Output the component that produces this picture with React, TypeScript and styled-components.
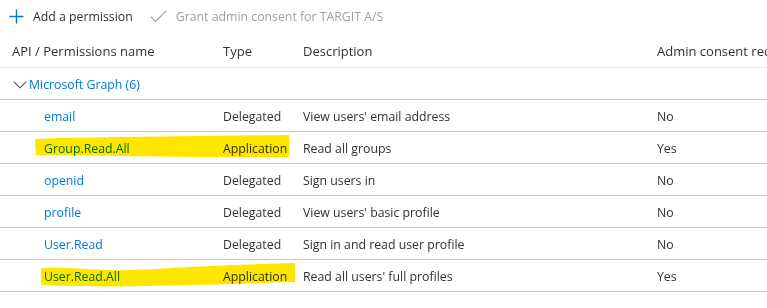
import React from 'react'
import styled, { createGlobalStyle } from 'styled-components'

const GlobalStyle = createGlobalStyle`
  html, body {
    margin: 0;
    padding: 0;
    background: #ffffff;
    overflow: hidden;
  }
  body {
    font-family: "Segoe UI", "Open Sans", "Liberation Sans", sans-serif;
    font-size: 12.3px;
    color: #323130;
  }
`

const Page = styled.div`
  width: 767px;
  height: 307px;
  padding-top: 1px;
  overflow: hidden;
  white-space: nowrap;
`

const Toolbar = styled.div`
  height: 31px;
  display: flex;
  align-items: center;
  padding-left: 9px;
`

const ToolButton = styled.button<{ $disabled?: boolean }>`
  display: flex;
  align-items: center;
  gap: 9px;
  padding: 0;
  margin-right: 17px;
  border: none;
  background: none;
  font: inherit;
  color: ${p => (p.$disabled ? '#a19f9d' : '#323130')};
  cursor: ${p => (p.$disabled ? 'default' : 'pointer')};
`

const Grid = styled.div`
  display: grid;
  grid-template-columns: 211px 80px 354px 1fr;
`

const HeadCell = styled.div`
  height: 33px;
  padding-top: 2px;
  box-sizing: content-box;
  display: flex;
  align-items: center;
  padding-left: 12px;
  font-size: 13px;
  color: #323130;
  border-bottom: 1px solid #edebe9;
`

const Cell = styled.div<{ $indent?: number }>`
  position: relative;
  height: 29px;
  padding-top: 2px;
  display: flex;
  align-items: center;
  padding-left: ${p => p.$indent ?? 12}px;
  border-bottom: 1px solid #c8c6c4;
`

const GroupCell = styled(Cell)`
  grid-column: 1 / -1;
  gap: 2px;
`

const Link = styled.a`
  color: #0078d4;
  text-decoration: none;
  cursor: pointer;
`

const Marker = styled.svg`
  position: absolute;
  left: 0;
  top: 2px;
  pointer-events: none;
  mix-blend-mode: multiply;
  z-index: 2;
`

type Perm = {
  name: string
  type: string
  desc: string
  consent: string
  marker?: string
}

const perms: Perm[] = [
  { name: 'email', type: 'Delegated', desc: "View users' email address", consent: 'No' },
  {
    name: 'Group.Read.All',
    type: 'Application',
    desc: 'Read all groups',
    consent: 'Yes',
    marker: 'M35 5 L60 4 L120 3 L200 2 L289 1 L289 23 L200 23 L120 22 L60 21 L36 21 Z',
  },
  { name: 'openid', type: 'Delegated', desc: 'Sign users in', consent: 'No' },
  { name: 'profile', type: 'Delegated', desc: "View users' basic profile", consent: 'No' },
  { name: 'User.Read', type: 'Delegated', desc: 'Sign in and read user profile', consent: 'No' },
  {
    name: 'User.Read.All',
    type: 'Application',
    desc: "Read all users' full profiles",
    consent: 'Yes',
    marker:
      'M41 6 C70 5 90 8 110 8 C140 9 160 6 190 5 C230 3 260 2 295 1 L295 20 C260 21 230 22 190 23 C150 24 110 25 80 24 C60 24 50 23 41 23 Z',
  },
]

function PlusIcon() {
  return (
    <svg width="15" height="15" viewBox="0 0 15 15">
      <path d="M7.5 0.5 V14.5 M0.5 7.5 H14.5" stroke="#0078d4" strokeWidth="1.4" fill="none" />
    </svg>
  )
}

function CheckIcon() {
  return (
    <svg width="17" height="13" viewBox="0 0 17 13">
      <path d="M0.8 6.8 L5.5 11.5 L16.2 0.8" stroke="#a19f9d" strokeWidth="1.1" fill="none" />
    </svg>
  )
}

function Chevron() {
  return (
    <svg width="14" height="8" viewBox="0 0 14 8">
      <path d="M0.7 0.7 L7 7 L13.3 0.7" stroke="#605e5c" strokeWidth="1.1" fill="none" />
    </svg>
  )
}

export default function App() {
  return (
    <Page>
      <GlobalStyle />
      <Toolbar>
        <ToolButton>
          <PlusIcon />
          Add a permission
        </ToolButton>
        <ToolButton $disabled>
          <CheckIcon />
          Grant admin consent for TARGIT A/S
        </ToolButton>
      </Toolbar>
      <Grid>
        <HeadCell>API / Permissions name</HeadCell>
        <HeadCell>Type</HeadCell>
        <HeadCell>Description</HeadCell>
        <HeadCell>Admin consent required</HeadCell>

        <GroupCell $indent={13}>
          <Chevron />
          <Link>Microsoft Graph (6)</Link>
        </GroupCell>

        {perms.map(p => (
          <React.Fragment key={p.name}>
            <Cell $indent={44}>
              {p.marker && (
                <Marker width="300" height="26" viewBox="0 0 300 26">
                  <path d={p.marker} fill="#ffe600" />
                </Marker>
              )}
              <Link>{p.name}</Link>
            </Cell>
            <Cell>{p.type}</Cell>
            <Cell>{p.desc}</Cell>
            <Cell>{p.consent}</Cell>
          </React.Fragment>
        ))}
      </Grid>
    </Page>
  )
}
